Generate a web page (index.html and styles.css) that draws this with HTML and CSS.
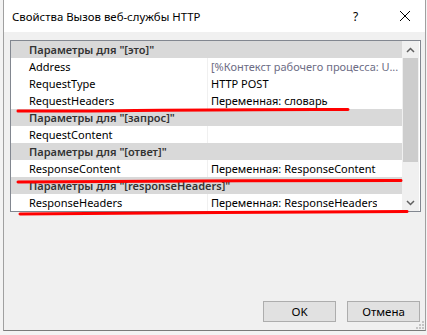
FILE: index.html
```html
<!DOCTYPE html>
<html lang="ru">
<head>
  <meta charset="UTF-8">
  <title>Свойства Вызов веб-службы HTTP</title>
  <link rel="stylesheet" href="styles.css">
</head>
<body>

<div class="screen">
  <div class="dialog">
    <div class="titlebar">
      <span class="title">Свойства Вызов веб-службы HTTP</span>
      <span class="help">?</span>
      <svg class="close" width="12" height="12" viewBox="0 0 12 12">
        <path d="M1 1 L11 11 M11 1 L1 11" stroke="#000" stroke-width="1"/>
      </svg>
    </div>

    <div class="content">
      <div class="props">
        <div class="rows">
          <div class="group">Параметры для "[это]"</div>
          <div class="row"><span class="name">Address</span><span class="value muted">[%Контекст рабочего процесса: U...</span></div>
          <div class="row"><span class="name">RequestType</span><span class="value">HTTP POST</span></div>
          <div class="row"><span class="name">RequestHeaders</span><span class="value">Переменная: словарь</span></div>
          <div class="group">Параметры для "[запрос]"</div>
          <div class="row"><span class="name">RequestContent</span><span class="value"></span></div>
          <div class="group">Параметры для "[ответ]"</div>
          <div class="row"><span class="name">ResponseContent</span><span class="value">Переменная: ResponseContent</span></div>
          <div class="group">Параметры для "[responseHeaders]"</div>
          <div class="row"><span class="name">ResponseHeaders</span><span class="value">Переменная: ResponseHeaders</span></div>
        </div>
        <div class="scrollbar">
          <div class="arrow">
            <svg width="9" height="6" viewBox="0 0 9 6"><path d="M1 5 L4.5 1.5 L8 5" fill="none" stroke="#606060" stroke-width="1.5"/></svg>
          </div>
          <div class="thumb"></div>
          <div class="track"></div>
          <div class="arrow">
            <svg width="9" height="6" viewBox="0 0 9 6"><path d="M1 1 L4.5 4.5 L8 1" fill="none" stroke="#606060" stroke-width="1.5"/></svg>
          </div>
        </div>
      </div>

      <div class="buttons">
        <button class="btn">OK</button>
        <button class="btn">Отмена</button>
      </div>
    </div>

    <svg class="grip" width="8" height="8" viewBox="0 0 8 8">
      <rect x="6" y="0" width="2" height="2" fill="#c4c4c4"/>
      <rect x="3" y="3" width="2" height="2" fill="#c4c4c4"/>
      <rect x="6" y="3" width="2" height="2" fill="#c4c4c4"/>
      <rect x="0" y="6" width="2" height="2" fill="#c4c4c4"/>
      <rect x="3" y="6" width="2" height="2" fill="#c4c4c4"/>
      <rect x="6" y="6" width="2" height="2" fill="#c4c4c4"/>
    </svg>
  </div>

  <!-- red marker lines drawn over the screenshot -->
  <svg class="marks" width="427" height="335" viewBox="0 0 427 335">
    <path d="M18 111 C 90 111.5, 200 109, 348 109.5" />
    <path d="M18 182 C 120 182, 280 180, 401 180.5" />
    <path d="M20 214 C 120 213.5, 300 211.5, 407 211.5" />
  </svg>
</div>

</body>
</html>
```

FILE: styles.css
```css
* { margin: 0; padding: 0; box-sizing: border-box; }
body {
  background: #dcdcdc;
  font-family: 'Noto Sans', 'Open Sans', sans-serif;
  font-size: 11px;
  color: #000;
  overflow: hidden;
}

.screen {
  position: relative;
  width: 427px;
  height: 335px;
  background: #f3f3f3;
}

.dialog {
  position: relative;
  margin-left: 3px;
  width: 423px;
  height: 331px;
  background: #f0f0f0;
  border-left: 1px solid #a0a0a0;
  border-right: 1px solid #a0a0a0;
  border-bottom: 1px solid #7a7a7a;
  display: flex;
  flex-direction: column;
}

.titlebar {
  height: 32px;
  background: #fff;
  display: flex;
  align-items: center;
  padding-left: 8px;
  font-size: 11.4px;
}
.title { flex-grow: 1; }
.help { width: 10px; margin-right: 36px; font-size: 12px; }
.close { margin-right: 14px; }

.content {
  flex-grow: 1;
  display: flex;
  flex-direction: column;
  padding: 8px 4px 8px 6px;
}

.props {
  display: flex;
  height: 172px;
  border: 1px solid #828790;
  background: #fff;
}
.rows { width: 391px; }

.group, .row { height: 17px; line-height: 17px; white-space: nowrap; }
.group {
  background: #d9d9d9;
  color: #333;
  font-weight: 600;
  padding-left: 18px;
}
.row { display: flex; }
.row .name { flex-shrink: 0; width: 197px; padding-left: 18px; border-right: 1px solid #f0f0f0; }
.row .value { padding-left: 3px; overflow: hidden; }
.row .muted { color: #6d6d85; }

.scrollbar {
  width: 17px;
  background: #f0f0f0;
  display: flex;
  flex-direction: column;
}
.arrow { height: 17px; display: flex; align-items: center; justify-content: center; }
.thumb { height: 104px; margin: 0 1px; background: #cdcdcd; }
.track { flex-grow: 1; }

.buttons {
  margin-top: auto;
  display: flex;
  justify-content: flex-end;
  gap: 11px;
  padding-right: 1px;
}
.btn {
  width: 73px;
  height: 21px;
  background: #e1e1e1;
  border: 1px solid #adadad;
  font-family: inherit;
  font-size: 11.5px;
  color: #000;
}

.grip { position: absolute; right: 1px; bottom: 1px; }

.marks { position: absolute; top: 0; left: 0; pointer-events: none; }
.marks path { fill: none; stroke: #f00; stroke-width: 3; stroke-linecap: round; }
```
